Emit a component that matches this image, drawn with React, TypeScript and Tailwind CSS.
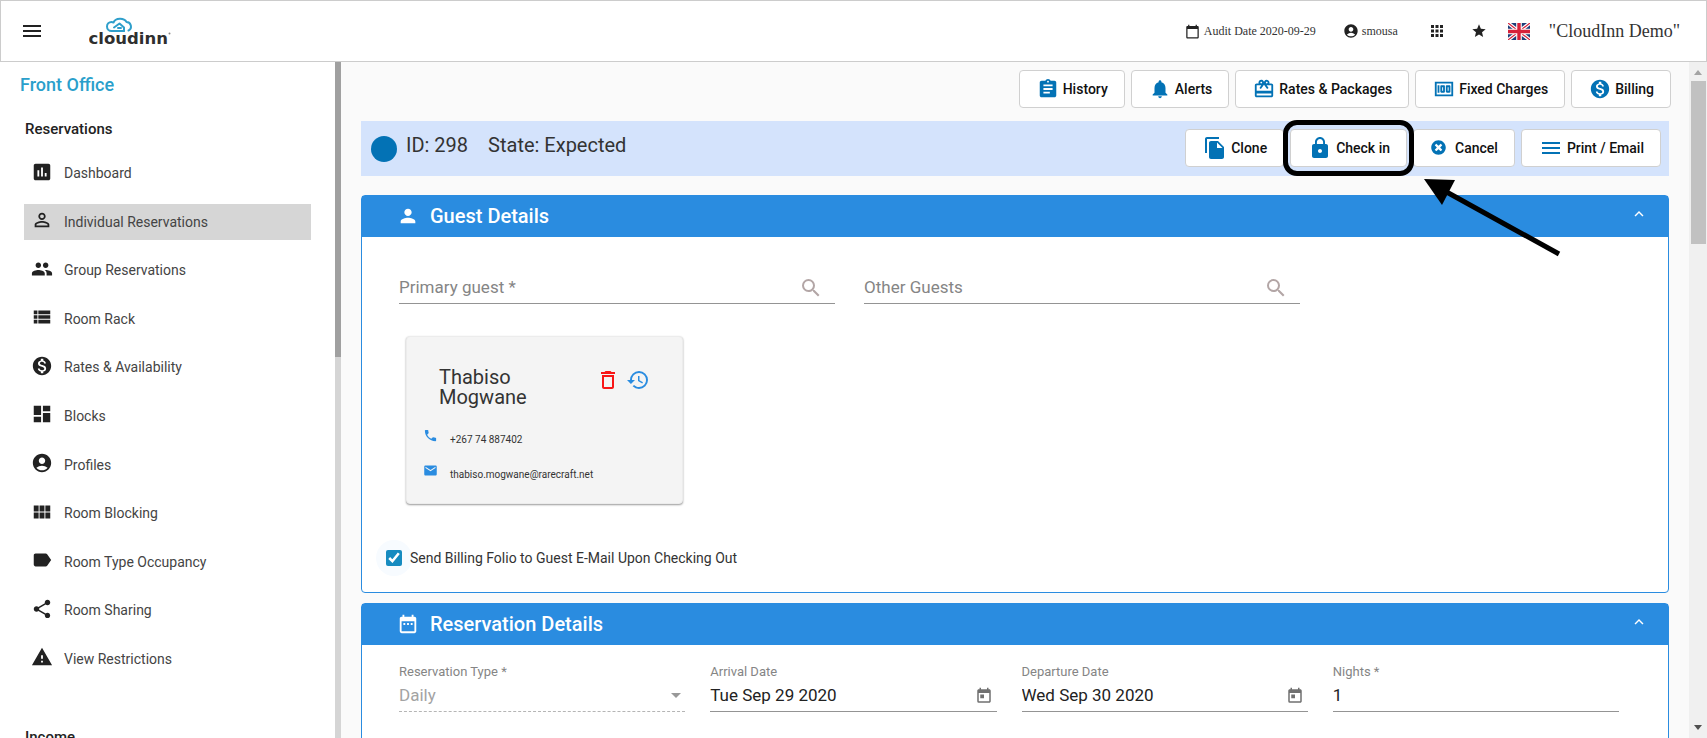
import { useState } from 'react';
import type { ReactNode } from 'react';
import type { IconType } from 'react-icons';
import {
  MdAccountCircle,
  MdApps,
  MdAssessment,
  MdAssignment,
  MdCalendarToday,
  MdCardGiftcard,
  MdDashboard,
  MdDateRange,
  MdDeleteOutline,
  MdFileCopy,
  MdGroup,
  MdHistory,
  MdKeyboardArrowUp,
  MdLabel,
  MdLocalPhone,
  MdLock,
  MdMail,
  MdMenu,
  MdMoney,
  MdMonetizationOn,
  MdNotifications,
  MdPerson,
  MdPersonOutline,
  MdSearch,
  MdShare,
  MdStar,
  MdToday,
  MdViewList,
  MdViewModule,
  MdWarning,
} from 'react-icons/md';
import { FaTimesCircle } from 'react-icons/fa';

const navItems: { label: string; icon: IconType; active?: boolean }[] = [
  { label: 'Dashboard', icon: MdAssessment },
  { label: 'Individual Reservations', icon: MdPersonOutline, active: true },
  { label: 'Group Reservations', icon: MdGroup },
  { label: 'Room Rack', icon: MdViewList },
  { label: 'Rates & Availability', icon: MdMonetizationOn },
  { label: 'Blocks', icon: MdDashboard },
  { label: 'Profiles', icon: MdAccountCircle },
  { label: 'Room Blocking', icon: MdViewModule },
  { label: 'Room Type Occupancy', icon: MdLabel },
  { label: 'Room Sharing', icon: MdShare },
  { label: 'View Restrictions', icon: MdWarning },
];

function Logo() {
  return (
    <svg viewBox="0 0 168 64" className="h-8 w-[84px]" role="img" aria-label="cloudinn">
      <g fill="none" stroke="#2f9fcb" strokeWidth="4" strokeLinecap="round" strokeLinejoin="round">
        <path d="M70 32H45a9 9 0 0 1 0-18q2 0 4 1a14 11 0 0 1 26-1a9 9 0 0 1 4 17" />
        <path d="M50 25l11-8 9 8v7M58 26h6" />
      </g>
      <text x="-1" y="57" fontSize="33" fontWeight="700" fontFamily="DejaVu Sans, sans-serif" fill="#2f2f2f">
        cloudinn
      </text>
      <circle cx="161" cy="37" r="2" fill="#888" />
    </svg>
  );
}

function Flag() {
  return (
    <svg viewBox="0 0 22 17" className="h-[17px] w-[22px]" role="img" aria-label="English">
      <rect width="22" height="17" fill="#1d3c78" />
      <path d="M0 0l22 17M22 0L0 17" stroke="#fff" strokeWidth="3.6" />
      <path d="M0 0l22 17M22 0L0 17" stroke="#d6203a" strokeWidth="1.2" />
      <path d="M11 0v17M0 8.500h22" stroke="#fff" strokeWidth="5.6" />
      <path d="M11 0v17M0 8.500h22" stroke="#d6203a" strokeWidth="3.4" />
    </svg>
  );
}

function ActionButton({ icon: Icon, label, iconClass = 'w-[22px] h-[22px]' }: { icon: IconType; label: string; iconClass?: string }) {
  return (
    <button className="flex items-center gap-1 h-[38px] pl-[17px] pr-4 bg-white border border-[#d0d0d0] rounded text-sm font-medium text-[#111] whitespace-nowrap">
      <Icon className={`text-[#0372b5] ${iconClass}`} />
      {label}
    </button>
  );
}

function Panel({ icon: Icon, title, children }: { icon: IconType; title: string; children: ReactNode }) {
  const [open, setOpen] = useState(true);

  return (
    <section className="bg-white border border-[#2a8ce0] rounded">
      <button
        onClick={() => setOpen(!open)}
        aria-expanded={open}
        className="flex items-center w-full h-[41px] pl-[35px] pr-5 pb-[2px] bg-[#2a8ce0] text-white text-left"
      >
        <Icon className="w-[22px] h-[22px]" />
        <span className="ml-[11px] flex-1 text-xl font-medium">{title}</span>
        <MdKeyboardArrowUp className="w-[18px] h-[18px] mb-1" />
      </button>
      {open && children}
    </section>
  );
}

function GuestSearch({ id, label }: { id: string; label: string }) {
  return (
    <div className="flex items-center flex-1 h-8 border-b border-[#949494]">
      <input
        id={id}
        aria-label={label}
        placeholder={label}
        className="flex-1 min-w-0 text-[17px] text-[#333] placeholder:text-[#858585] outline-none"
      />
      <button aria-label={`Search ${label}`} className="mr-3">
        <MdSearch className="w-6 h-6 text-[#b3a6a6]" />
      </button>
    </div>
  );
}

function Field({ id, label, value, picker }: { id: string; label: string; value: string; picker?: boolean }) {
  return (
    <div>
      <label htmlFor={id} className="block text-[13px] leading-4 text-[#858585]">{label}</label>
      <div className="flex items-center h-8 border-b border-[#949494]">
        <input id={id} defaultValue={value} className="flex-1 min-w-0 text-[17px] text-[#222] outline-none" />
        {picker && (
          <button aria-label={`Pick ${label}`} className="mr-1">
            <MdToday className="w-[18px] h-[18px] text-[#707070]" />
          </button>
        )}
      </div>
    </div>
  );
}

function Sidebar() {
  return (
    <aside className="flex w-[341px] shrink-0 bg-white">
      <div className="flex-1 overflow-hidden">
        <h2 className="pl-5 pt-[11px] text-lg leading-6 font-medium text-[#2a9fcb]">Front Office</h2>
        <h3 className="pl-[25px] mt-[22px] text-[15px] leading-5 font-medium text-[#222]">Reservations</h3>
        <ul className="flex flex-col justify-between h-[522px] mt-4 ml-6 mr-6">
          {navItems.map(({ label, icon: Icon, active }) => (
            <li key={label}>
              <a
                href="#"
                className={`flex items-center gap-[11px] h-9 pl-[7px] text-sm text-[#444] ${active ? 'bg-[#d6d6d6]' : ''}`}
              >
                <Icon className="w-[22px] h-[22px] mb-[3px] text-[#222]" />
                {label}
              </a>
            </li>
          ))}
        </ul>
        <h3 className="pl-[25px] mt-[50px] text-[15px] leading-5 font-medium text-[#222]">Income</h3>
      </div>
      <div className="w-[6px] bg-[#d5d5d5]">
        <div className="h-[295px] bg-[#a0a0a0]" />
      </div>
    </aside>
  );
}

export default function App() {
  const [sendFolio, setSendFolio] = useState(true);

  return (
    <div className="flex flex-col h-screen overflow-hidden bg-[#fafafa] font-['Roboto',sans-serif] text-[#333]">
      <header className="flex items-center h-[62px] shrink-0 pl-[19px] pr-[26px] bg-white border border-[#ccc] font-['Liberation_Serif',serif]">
        <button aria-label="Menu">
          <MdMenu className="w-6 h-6 text-[#222]" />
        </button>
        <div className="ml-[45px]"><Logo /></div>
        <div className="flex items-center ml-auto text-xs text-[#333]">
          <MdCalendarToday className="w-[15px] h-[15px] mr-1 text-[#222]" />
          <span>Audit Date 2020-09-29</span>
          <MdAccountCircle className="w-4 h-4 ml-[27px] mr-[3px] text-[#222]" />
          <span>smousa</span>
          <MdApps className="w-[18px] h-[18px] ml-[30px] text-[#222]" />
          <MdStar className="w-4 h-4 ml-[25px] text-[#222]" />
          <div className="ml-[21px]"><Flag /></div>
          <span className="ml-[19px] text-lg">"CloudInn Demo"</span>
        </div>
      </header>

      <div className="flex flex-1 min-h-0">
        <Sidebar />

        <main className="flex-1 min-w-0 px-5 pt-2 overflow-hidden">
          <div className="flex justify-end gap-[6px] -mr-[2px]">
            <ActionButton icon={MdAssignment} label="History" />
            <ActionButton icon={MdNotifications} label="Alerts" />
            <ActionButton icon={MdCardGiftcard} label="Rates & Packages" />
            <ActionButton icon={MdMoney} label="Fixed Charges" />
            <ActionButton icon={MdMonetizationOn} label="Billing" />
          </div>

          <div className="flex items-center h-[55px] mt-[13px] pl-[10px] pr-2 bg-[#d4e3fc]">
            <span className="w-[26px] h-[26px] rounded-full bg-[#0372b5]" />
            <div className="flex gap-5 ml-[9px] mb-2 text-xl text-[#333]">
              <span>ID: 298</span>
              <span>State: Expected</span>
            </div>
            <div className="flex gap-[6px] ml-auto mb-[2px]">
              <ActionButton icon={MdFileCopy} label="Clone" iconClass="w-6 h-6" />
              <div className="relative">
                <ActionButton icon={MdLock} label="Check in" iconClass="w-6 h-6" />
                <div className="absolute -inset-x-[7px] -inset-y-[9px] border-[5px] border-black rounded-[14px] pointer-events-none" />
                <svg viewBox="0 0 140 80" className="absolute left-[133px] top-[49px] w-[140px] h-20 z-10 pointer-events-none">
                  <path d="M20 12L136 76" stroke="#000" strokeWidth="5" />
                  <path d="M1 1l31 1-13 25z" fill="#000" />
                </svg>
              </div>
              <ActionButton icon={FaTimesCircle} label="Cancel" iconClass="w-[15px] h-[15px] mr-[5px]" />
              <ActionButton icon={MdMenu} label="Print / Email" iconClass="w-6 h-6" />
            </div>
          </div>

          <div className="flex flex-col gap-[10px] mt-[19px]">
            <Panel icon={MdPerson} title="Guest Details">
              <div className="pt-[35px] pb-6">
                <div className="flex gap-[29px] w-[69%] ml-[37px]">
                  <GuestSearch id="primary-guest" label="Primary guest *" />
                  <GuestSearch id="other-guests" label="Other Guests" />
                </div>

                <div className="w-[277px] h-[168px] mt-8 ml-11 px-4 pt-[30px] bg-[#f4f4f4] rounded border border-[#ececec] shadow-[0_1px_2px_rgba(0,0,0,0.4)]">
                  <div className="flex justify-between px-4">
                    <h4 className="w-28 text-xl leading-5">Thabiso Mogwane</h4>
                    <div className="flex gap-[6px] h-[26px] items-center">
                      <button aria-label="Remove guest"><MdDeleteOutline className="w-6 h-6 text-[#f81616]" /></button>
                      <button aria-label="Guest history"><MdHistory className="w-6 h-6 text-[#2a8ce0]" /></button>
                    </div>
                  </div>
                  <div className="flex items-center gap-3 mt-[21px] text-[10px] leading-4">
                    <MdLocalPhone className="w-[15px] h-[15px] mb-2 text-[#2a8ce0]" />
                    +267 74 887402
                  </div>
                  <div className="flex items-center gap-3 mt-3 text-[10px] leading-4">
                    <MdMail className="w-[15px] h-[15px] mb-2 text-[#2a8ce0]" />
                    thabiso.mogwane@rarecraft.net
                  </div>
                </div>

                <label className="flex items-center gap-2 mt-11 ml-6 text-sm leading-5 text-[#333]">
                  <span className="flex rounded-full shadow-[0_0_0_10px_#f7fbff]">
                    <input
                      type="checkbox"
                      checked={sendFolio}
                      onChange={(e) => setSendFolio(e.target.checked)}
                      className="w-4 h-4 accent-[#168bc0]"
                    />
                  </span>
                  <span className="relative">Send Billing Folio to Guest E-Mail Upon Checking Out</span>
                </label>
              </div>
            </Panel>

            <Panel icon={MdDateRange} title="Reservation Details">
              <div className="grid grid-cols-4 gap-[25px] pt-[19px] pb-10 pl-[37px] pr-[49px]">
                <div>
                  <label htmlFor="reservation-type" className="block text-[13px] leading-4 text-[#858585]">
                    Reservation Type *
                  </label>
                  <div className="relative h-8 border-b border-dashed border-[#b5b5b5]">
                    <select
                      id="reservation-type"
                      disabled
                      className="w-full h-full appearance-none text-[17px] text-[#a3a3a3] opacity-100"
                    >
                      <option>Daily</option>
                    </select>
                    <span className="absolute right-1 top-[13px] border-x-[5px] border-t-[5px] border-x-transparent border-t-[#999]" />
                  </div>
                </div>
                <Field id="arrival" label="Arrival Date" value="Tue Sep 29 2020" picker />
                <Field id="departure" label="Departure Date" value="Wed Sep 30 2020" picker />
                <Field id="nights" label="Nights *" value="1" />
              </div>
            </Panel>
          </div>
        </main>

        <div className="flex flex-col items-center w-[18px] shrink-0 py-2 bg-[#f0f0f0]">
          <span className="border-x-4 border-b-[5px] border-x-transparent border-b-[#a3a3a3]" />
          <div className="w-[15px] h-[163px] mt-[6px] bg-[#c1c1c1]" />
          <span className="mt-auto border-x-4 border-t-[5px] border-x-transparent border-t-[#505050]" />
        </div>
      </div>
    </div>
  );
}
